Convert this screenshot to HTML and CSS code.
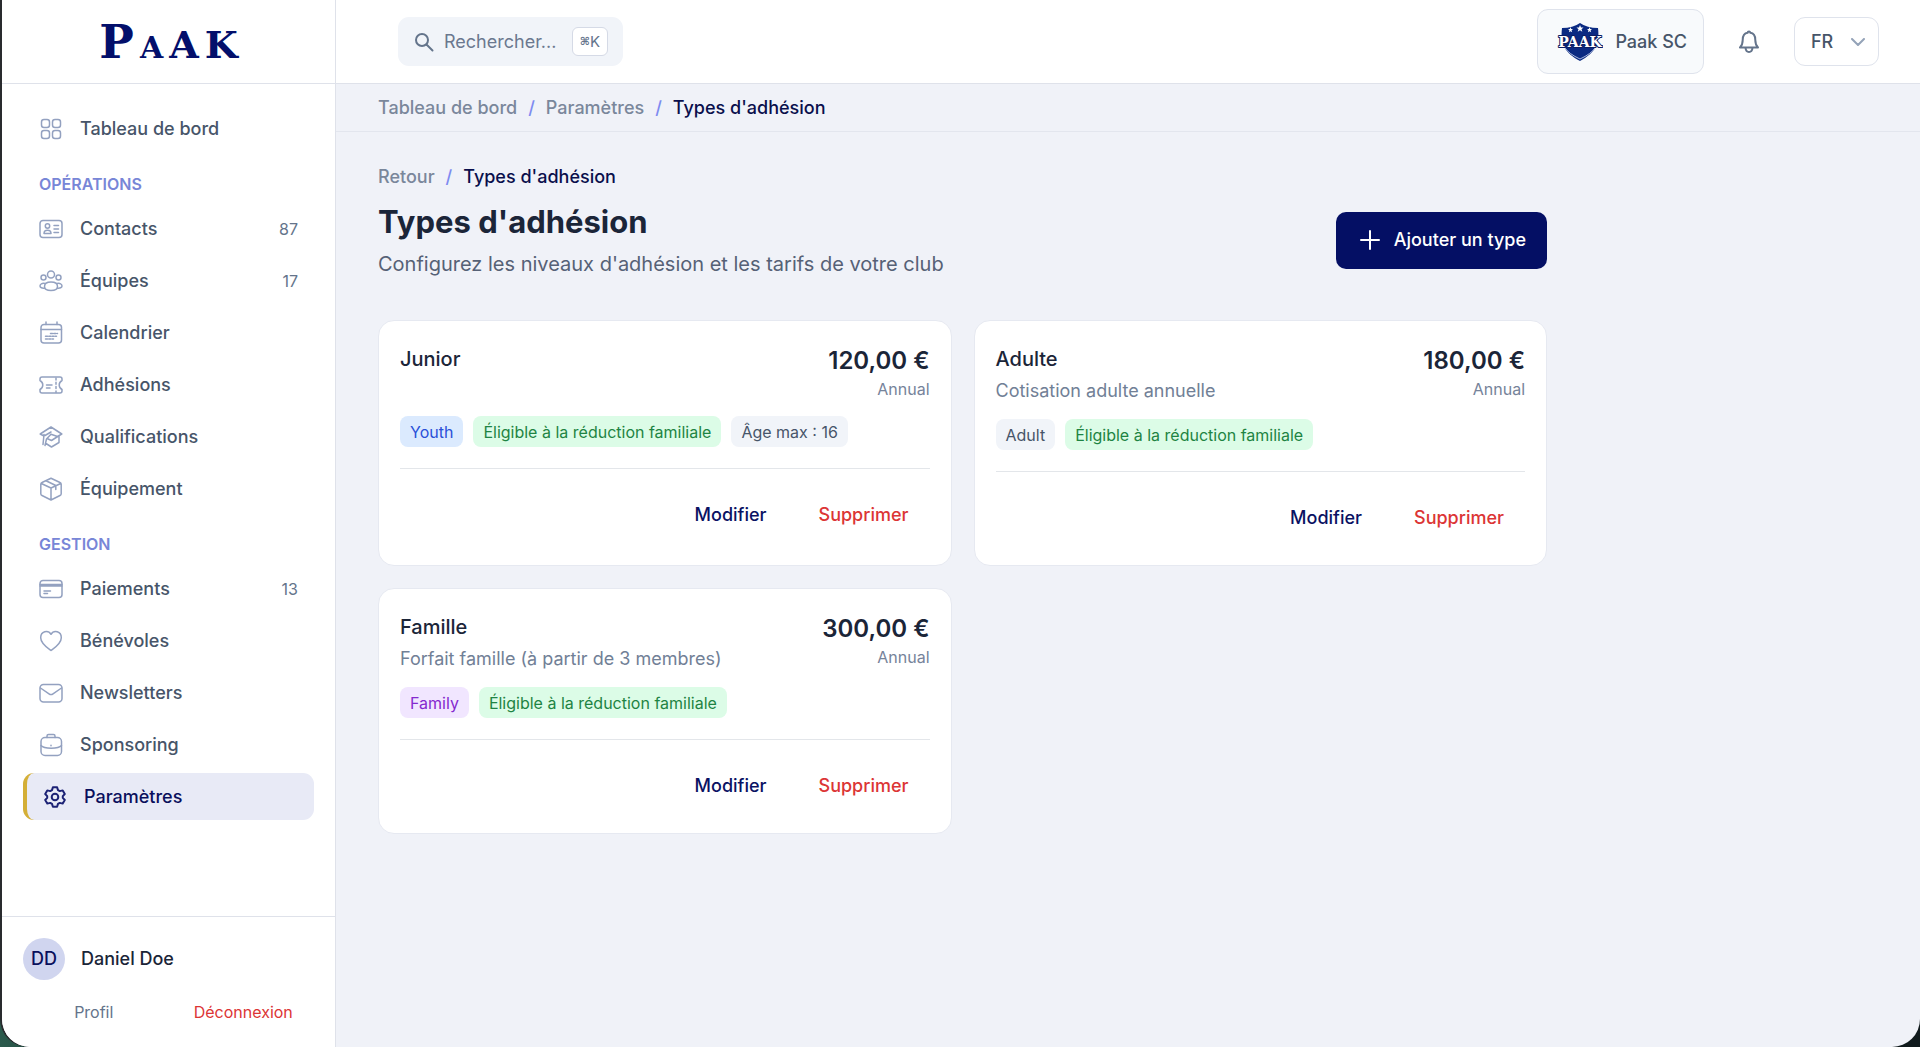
FILE: index.html
```html
<!DOCTYPE html>
<html lang="fr">
<head>
<meta charset="utf-8">
<meta name="viewport" content="width=device-width, initial-scale=1">
<title>Types d'adhésion</title>
<link rel="stylesheet" href="styles.css">
</head>
<body>
<div class="app">
  <aside class="sidebar">
    <a class="brand" href="#" aria-label="PAAK"><span class="brand-p">P</span><span class="brand-a">A</span><span>A</span><span>K</span></a>
    <nav class="nav">
      <a class="nav-item" href="#"><svg class="icon" viewBox="0 0 24 24"><rect x="2.5" y="2.500" width="8" height="8" rx="2.500"/><rect x="13.500" y="2.500" width="8" height="8" rx="2.500"/><rect x="2.500" y="13.500" width="8" height="8" rx="2.500"/><rect x="13.500" y="13.500" width="8" height="8" rx="2.500"/></svg><span class="nav-text">Tableau de bord</span></a>
      <h2 class="nav-label">OPÉRATIONS</h2>
      <a class="nav-item" href="#"><svg class="icon" viewBox="0 0 24 24"><rect x="1" y="3.500" width="22" height="17" rx="3"/><circle cx="8.500" cy="9" r="2.200"/><path d="M5 16.500c0-2.200 1.200-3.200 3.500-3.200s3.500 1 3.500 3.200zM15 8.500h4.500M15 12h4.500M15 15.500h4.500"/></svg><span class="nav-text">Contacts</span><span class="count">87</span></a>
      <a class="nav-item" href="#"><svg class="icon" viewBox="0 0 24 24"><circle cx="12" cy="5.500" r="3.500"/><circle cx="4.500" cy="8.500" r="2.500"/><circle cx="19.500" cy="8.500" r="2.500"/><path d="M5.500 17.500c0-3 3-4.500 6.500-4.500s6.500 1.500 6.500 4.500-3 4-6.500 4-6.500-1-6.500-4zM6 14.500c-3-.5-5 .5-5 2.500 0 1.500 2 2.500 5 2M18 14.500c3-.5 5 .5 5 2.500 0 1.500-2 2.500-5 2"/></svg><span class="nav-text">Équipes</span><span class="count">17</span></a>
      <a class="nav-item" href="#"><svg class="icon" viewBox="0 0 24 24"><rect x="2" y="3.500" width="20.500" height="18.500" rx="3"/><path d="M2 8.500h20.500M7 1v2.500M18 1v2.500"/><path stroke-dasharray="2 1.300" d="M11.500 12.500h7M6.500 15.200h11M6.500 18h8"/></svg><span class="nav-text">Calendrier</span></a>
      <a class="nav-item" href="#"><svg class="icon" viewBox="0 0 24 24"><path d="M3 4h18a2 2 0 0 1 2 2v1.500c-1.800 1-2.800 2.700-2.800 4.500s1 3.500 2.800 4.500V18a2 2 0 0 1-2 2H3a2 2 0 0 1-2-2v-1.500c1.800-1 2.800-2.700 2.800-4.500S2.800 8.500 1 7.500V6a2 2 0 0 1 2-2zM7.500 12h5.500M7.500 15h3.500"/><path stroke-dasharray="2 2.300" d="M17 5v14.500"/></svg><span class="nav-text">Adhésions</span></a>
      <a class="nav-item" href="#"><svg class="icon" viewBox="0 0 24 24"><path d="M4 10.500 1.200 9 12 2l10.800 7-4.300 2.500L12 9.200 7.500 14 6 20.500M5 9.500 4 19.500M12 7l-6 3.500M7 18.500l5.500 3.500 7.500-4.500v-6.500M8 13.500l4.500 2 7-4.500"/></svg><span class="nav-text">Qualifications</span></a>
      <a class="nav-item" href="#"><svg class="icon" viewBox="0 0 24 24"><path d="M12 1.200 21 5.500a2 2 0 0 1 1.200 1.800v9.400a2 2 0 0 1-1.200 1.800L12 23l-9-4.500a2 2 0 0 1-1.200-1.800V7.300A2 2 0 0 1 3 5.500zM2.300 6.500 12 11l9.700-4.500M12 11v12M7 3.800l9.800 4.700v4"/></svg><span class="nav-text">Équipement</span></a>
      <h2 class="nav-label">GESTION</h2>
      <a class="nav-item" href="#"><svg class="icon" viewBox="0 0 24 24"><rect x="1" y="3.500" width="22" height="17" rx="3"/><path d="M1 7.500h22M1 9h22M5 14h6.500M5 16.500h3.500"/></svg><span class="nav-text">Paiements</span><span class="count">13</span></a>
      <a class="nav-item" href="#"><svg class="icon" viewBox="0 0 24 24"><path d="M12 21.500C8 18.500 1.700 14.500 1.700 8.700c0-6.400 7.300-8.300 10.300-3.400 3-4.900 10.300-3 10.300 3.400 0 5.800-6.300 9.800-10.300 12.800z"/></svg><span class="nav-text">Bénévoles</span></a>
      <a class="nav-item" href="#"><svg class="icon" viewBox="0 0 24 24"><rect x="1" y="3.500" width="22" height="17.500" rx="3.500"/><path d="m1.500 7 8.500 5.800a3.500 3.500 0 0 0 4 0L22.500 7"/></svg><span class="nav-text">Newsletters</span></a>
      <a class="nav-item" href="#"><svg class="icon" viewBox="0 0 24 24"><rect x="2" y="4.500" width="20.500" height="18" rx="4"/><path d="M8 4.500V3a1.500 1.500 0 0 1 1.500-1.500h5A1.500 1.500 0 0 1 16 3v1.500M2 12.500c3 3.500 17.500 3.500 20.500 0M12 12.200v.6"/></svg><span class="nav-text">Sponsoring</span></a>
      <a class="nav-item active" href="#" aria-current="page"><svg class="icon" viewBox="0 0 24 24"><circle cx="12" cy="12" r="3.300"/><path d="M9.900 2.200h4.200l.9 2.900 1.800 1 2.900-.7 2.100 3.600-2 2.100v1.800l2 2.100-2.100 3.600-2.900-.7-1.800 1-.9 2.900H9.900L9 18.900l-1.800-1-2.900.7L2.200 15l2-2.100v-1.800l-2-2.100 2.100-3.600 2.900.7 1.800-1z"/></svg><span class="nav-text">Paramètres</span></a>
    </nav>
    <div class="account">
      <div class="user"><span class="avatar">DD</span><span>Daniel Doe</span></div>
      <div class="account-links"><a href="#">Profil</a><button class="logout" type="button">Déconnexion</button></div>
    </div>
  </aside>
  <div class="page">
    <header class="topbar">
      <label class="search"><svg class="search-icon" viewBox="0 0 20 20"><circle cx="8" cy="8" r="6"/><path d="m12.500 12.500 6 6"/></svg><input type="text" placeholder="Rechercher..." aria-label="Rechercher"><kbd><span>⌘</span>K</kbd></label>
      <div class="tools">
        <button class="club" type="button"><svg class="crest" viewBox="0 0 46 38"><path fill="#0b2a82" d="M5 5q11 0 18-5 7 5 18 5c2 16-3 25-18 33C8 30 3 21 5 5z"/><path fill="none" stroke="#a9b7dc" d="M8 25q4 6 15 11 11-5 15-11"/><path fill="#fff" d="m23 2 1 2.500h2.500l-2 1.700.8 2.500L23 7.200l-2.300 1.500.8-2.500-2-1.700H22zM13.500 4l.7 2H16l-1.400 1.300.5 2-1.600-1.100-1.600 1.100.5-2L11 6h1.800zM32.500 4l.7 2H35l-1.400 1.300.5 2-1.600-1.100-1.600 1.100.5-2L30 6h1.800z"/><text class="crest-text" x="23" y="24" text-anchor="middle">PAAK</text></svg><span>Paak SC</span></button>
        <button class="bell" type="button" aria-label="Notifications"><svg viewBox="0 0 20 24"><path d="M1 17.500h18c-2-2-2.700-3.500-2.700-7.500 0-4-2-6.800-5-7.200a1.300 1.300 0 0 0-2.600 0c-3 .4-5 3.200-5 7.200 0 4-.7 5.500-2.700 7.500zM6.500 18c.3 2.700 1.500 4 3.500 4s3.200-1.300 3.500-4"/></svg></button>
        <div class="lang"><select aria-label="Langue"><option>FR</option><option>EN</option></select><svg class="chevron" viewBox="0 0 14 8"><path d="m1 1 6 6 6-6"/></svg></div>
      </div>
    </header>
    <nav class="crumbs crumbs-bar" aria-label="Fil d'Ariane"><a href="#">Tableau de bord</a><i>/</i><a href="#">Paramètres</a><i>/</i><span>Types d'adhésion</span></nav>
    <main class="content">
      <nav class="crumbs" aria-label="Retour"><a href="#">Retour</a><i>/</i><span>Types d'adhésion</span></nav>
      <div class="heading">
        <div><h1>Types d'adhésion</h1><p class="lead">Configurez les niveaux d'adhésion et les tarifs de votre club</p></div>
        <button class="add" type="button"><svg viewBox="0 0 20 20"><path d="M10 1v18M1 10h18"/></svg>Ajouter un type</button>
      </div>
      <div class="cards">
        <article class="card">
          <div class="card-head"><div><h3>Junior</h3></div><div class="price"><strong>120,00 €</strong><span>Annual</span></div></div>
          <div class="badges"><span class="badge blue">Youth</span><span class="badge green">Éligible à la réduction familiale</span><span class="badge gray">Âge max : 16</span></div>
          <div class="actions"><button type="button">Modifier</button><button class="danger" type="button">Supprimer</button></div>
        </article>
        <article class="card">
          <div class="card-head"><div><h3>Adulte</h3><p>Cotisation adulte annuelle</p></div><div class="price"><strong>180,00 €</strong><span>Annual</span></div></div>
          <div class="badges"><span class="badge gray">Adult</span><span class="badge green">Éligible à la réduction familiale</span></div>
          <div class="actions"><button type="button">Modifier</button><button class="danger" type="button">Supprimer</button></div>
        </article>
        <article class="card">
          <div class="card-head"><div><h3>Famille</h3><p>Forfait famille (à partir de 3 membres)</p></div><div class="price"><strong>300,00 €</strong><span>Annual</span></div></div>
          <div class="badges"><span class="badge purple">Family</span><span class="badge green">Éligible à la réduction familiale</span></div>
          <div class="actions"><button type="button">Modifier</button><button class="danger" type="button">Supprimer</button></div>
        </article>
      </div>
    </main>
  </div>
</div>
</body>
</html>
```
FILE: styles.css
```css
* { box-sizing: border-box; }
body {
  margin: 0;
  padding-left: 2px;
  background: linear-gradient(90deg, #2b5a4c, #14201f 10%, #101a1c);
  font: 500 18px/26px Inter, "Noto Sans", sans-serif;
  color: #1b2538;
}
h1, h2, h3, p { margin: 0; font-weight: 500; }
a { color: inherit; text-decoration: none; }
button, input, select { font: inherit; color: inherit; border: 0; background: none; padding: 0; margin: 0; }
button { cursor: pointer; }
svg { fill: none; stroke: currentColor; stroke-linecap: round; stroke-linejoin: round; flex: none; }

.app {
  display: grid;
  grid-template-columns: 334px minmax(0, 1fr);
  min-height: 100vh;
  overflow: hidden;
  border-radius: 0 0 28px 28px;
  background: #f0f2f8;
  box-shadow: -2px 0 #292b2e;
}

/* Sidebar */
.sidebar { display: flex; flex-direction: column; background: #fff; border-right: 1px solid #dfe2ea; }
.brand {
  display: flex; align-items: baseline; justify-content: center; gap: 6px;
  height: 84px; padding-top: 16px;
  border-bottom: 1px solid #dfe2ea;
  font: 700 38px/52px "DejaVu Serif", serif;
  color: #030f6b;
}
.brand-p { font-size: 46px; }
.brand-a { font-size: 30px; }
.nav { display: flex; flex-direction: column; gap: 5px; padding: 21px; flex: 1; }
.nav-item { display: flex; align-items: center; gap: 17px; height: 47px; padding: 0 16px; border-radius: 11px; color: #475569; }
.icon { width: 24px; height: 24px; stroke-width: 1.5; color: #93a1c0; }
.nav-text { flex: 1; }
.count { font-size: 16px; font-weight: 400; color: #64748b; }
.nav-label { padding: 17px 16px 6px; font-size: 16px; line-height: 20px; font-weight: 600; color: #7886d7; }
.nav-item.active { border-left: 4px solid #d4af37; background: #e8eaf6; color: #0a0f5c; }
.nav-item.active .icon { color: #1c2275; stroke-width: 2; }
.account { display: grid; gap: 18px; padding: 21px; border-top: 1px solid #dfe2ea; }
.user { display: flex; align-items: center; gap: 16px; }
.avatar { display: grid; place-items: center; width: 42px; height: 42px; border-radius: 50%; background: #d0d5ef; color: #0a0f5c; }
.account-links { display: grid; grid-template-columns: 1fr 1fr; gap: 8px; font-size: 16px; font-weight: 400; line-height: 28px; text-align: center; color: #64748b; }
.logout { color: #dc3535; }

/* Top bar */
.topbar { display: flex; align-items: center; justify-content: space-between; height: 84px; padding: 0 41px 0 62px; background: #fff; border-bottom: 1px solid #dfe2ea; }
.search { display: flex; align-items: center; gap: 10px; width: 225px; height: 49px; padding: 0 15px 0 16px; border-radius: 11px; background: #f1f4f9; color: #64748b; }
.search-icon { width: 20px; height: 20px; stroke-width: 2; }
.search input { flex: 1; min-width: 0; outline: 0; font-weight: 400; }
.search input::placeholder { color: #6b788f; opacity: 1; }
kbd { display: flex; align-items: center; height: 29px; padding: 0 7px; border: 1px solid #d5dae6; border-radius: 6px; background: #fff; font: 400 15px/20px Inter, sans-serif; }
kbd span { font: 700 11px/20px "DejaVu Sans", sans-serif; }
.tools { display: flex; align-items: center; gap: 35px; color: #475569; }
.club { display: flex; align-items: center; gap: 12px; height: 65px; padding: 0 16px 0 19px; border: 1px solid #dfe3ec; border-radius: 11px; background: #f8fafc; }
.crest { width: 46px; height: 38px; stroke: none; }
.crest-text { font: 700 14px "DejaVu Serif", serif; fill: #fff; stroke: #0b1d63; stroke-width: 2; paint-order: stroke; }
.bell { display: grid; color: #64748b; }
.bell svg { width: 20px; height: 24px; stroke-width: 2; }
.lang { display: grid; align-items: center; width: 85px; height: 49px; border: 1px solid #dfe3ec; border-radius: 11px; }
.lang > * { grid-area: 1 / 1; }
.lang select { appearance: none; height: 47px; padding-left: 16px; }
.chevron { justify-self: end; width: 14px; height: 8px; margin-right: 13px; stroke-width: 2; color: #94a3b8; pointer-events: none; }

/* Content */
.crumbs { display: flex; gap: 11px; color: #7a879b; }
.crumbs i { font-style: normal; color: #7e8bf0; }
.crumbs span { color: #0a0f4c; }
.crumbs-bar { height: 48px; padding: 11px 42px; border-bottom: 1px solid #e3e6ee; }
.content { max-width: 1253px; padding: 32px 42px; }
.heading { display: flex; align-items: center; justify-content: space-between; margin-top: 8px; }
h1 { font-size: 31px; line-height: 48px; font-weight: 700; }
.lead { font-size: 20px; line-height: 36px; font-weight: 400; color: #566176; }
.add { display: flex; align-items: center; gap: 14px; height: 57px; padding: 0 21px 0 24px; border-radius: 10px; background: #040f64; color: #fff; }
.add svg { width: 20px; height: 20px; stroke-width: 2; }
.cards { display: grid; grid-template-columns: repeat(2, minmax(0, 1fr)); gap: 22px; margin-top: 38px; }
.card { padding: 23px 21px; border: 1px solid #e6e9f1; border-radius: 16px; background: #fff; }
.card-head { display: flex; justify-content: space-between; }
h3 { font-size: 20px; line-height: 30px; }
.card p { margin-top: 4px; font-weight: 400; color: #718096; }
.price { display: grid; align-content: start; text-align: right; font-size: 16px; line-height: 23px; font-weight: 400; color: #76839a; }
.price strong { font-size: 24px; line-height: 34px; font-weight: 600; color: #1b2538; }
.badges { display: flex; gap: 10px; margin: 15px 0 21px; }
.badge { height: 31px; padding: 0 10px; border-radius: 8px; font-size: 16px; font-weight: 400; line-height: 32px; }
.blue { background: #dbeafe; color: #2950d8; }
.green { background: #dcfce7; color: #1e8443; }
.gray { background: #f1f4f9; color: #475569; }
.purple { background: #f1e6ff; color: #8529cf; }
.actions { display: flex; justify-content: flex-end; gap: 10px; padding-top: 22px; border-top: 1px solid #e3e6ea; }
.actions button { height: 48px; padding: 0 21px; color: #0a1263; }
.actions .danger { color: #dc3535; }
```
